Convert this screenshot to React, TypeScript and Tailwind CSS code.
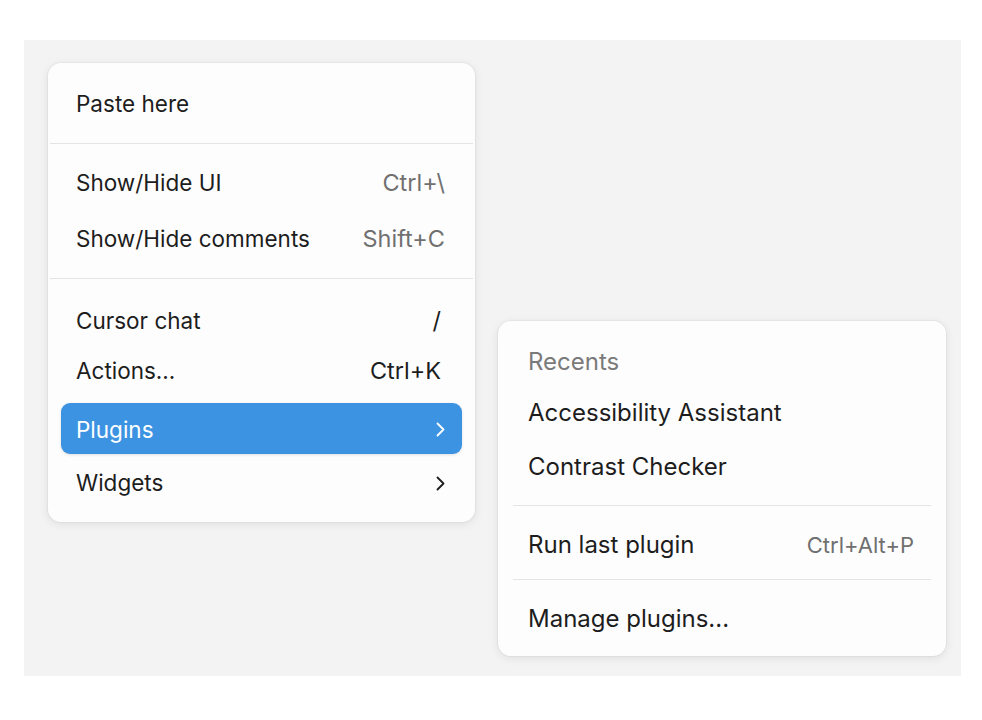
import type { ReactNode } from "react"

const font = { fontFamily: "Inter, 'Noto Sans', sans-serif" }

function Chevron({ className }: { className?: string }) {
  return (
    <svg width="9" height="15" viewBox="0 0 9 15" fill="none" className={className}>
      <path d="M1.5 1.5l6 6-6 6" stroke="currentColor" strokeWidth="1.8" strokeLinecap="round" strokeLinejoin="round" />
    </svg>
  )
}

function Row({
  label,
  right,
  h,
  dimRight = true,
  active = false,
}: {
  label: string
  right?: ReactNode
  h: string
  dimRight?: boolean
  active?: boolean
}) {
  return (
    <div
      className={`${h} mx-[13px] px-[15px] pt-[2px] flex items-center justify-between rounded-[9px] ${
        active ? "bg-[#3c93e2] text-white shadow-[0_1px_3px_rgba(0,0,0,0.12)]" : "text-[#1d1d1d]"
      }`}
    >
      <span>{label}</span>
      {right && (
        <span className={`pr-[2px] text-[23.5px] ${active ? "text-white" : dimRight ? "text-[#707070]" : "text-[#1d1d1d]"}`}>{right}</span>
      )}
    </div>
  )
}

function Divider({ inset }: { inset: string }) {
  return <div className={`h-px bg-[#e4e4e4] ${inset}`} />
}

export default function App() {
  return (
    <div className="w-[982px] h-[720px] bg-white pt-[40px] pl-[24px]" style={font}>
      <div className="w-[937px] h-[636px] bg-[#f3f3f3] flex items-start gap-[23px] pl-[24px] pt-[23px]">
        {/* main context menu */}
        <div className="w-[427px] h-[459px] rounded-[13px] bg-[#fdfdfd] shadow-[0_2px_10px_rgba(0,0,0,0.09),0_0_0_1px_rgba(0,0,0,0.03)] text-[22.5px] flex flex-col">
          <div className="h-[80px] flex flex-col justify-center">
            <Row label="Paste here" h="h-[52px]" />
          </div>
          <Divider inset="mx-[2px]" />
          <div className="pt-[10px] pb-[12px]">
            <Row label="Show/Hide UI" right="Ctrl+\" h="h-[56px]" />
            <Row label="Show/Hide comments" right="Shift+C" h="h-[56px]" />
          </div>
          <Divider inset="mx-[2px]" />
          <div className="pt-[16px] flex flex-col">
            <Row label="Cursor chat" right={<span className="pr-[4px]">/</span>} dimRight={false} h="h-[50px]" />
            <Row label="Actions..." right={<span className="pr-[4px]">Ctrl+K</span>} dimRight={false} h="h-[50px]" />
            <div className="h-[8px]" />
            <Row label="Plugins" right={<Chevron />} active h="h-[51px]" />
            <div className="h-[3px]" />
            <Row label="Widgets" right={<Chevron />} dimRight={false} h="h-[50px]" />
          </div>
        </div>

        {/* plugins submenu */}
        <div className="mt-[258px] w-[448px] h-[335px] rounded-[13px] bg-[#fdfdfd] shadow-[0_2px_10px_rgba(0,0,0,0.09),0_0_0_1px_rgba(0,0,0,0.03)] text-[24px] text-[#1d1d1d] flex flex-col">
          <div className="pt-[20px] pb-[16px] px-[30px]">
            <div className="h-[40px] pt-[2px] flex items-center text-[#7a7a7a]">Recents</div>
            <div className="h-[62px] pt-[2px] flex items-center">Accessibility Assistant</div>
            <div className="h-[46px] pt-[2px] flex items-center">Contrast Checker</div>
          </div>
          <Divider inset="mx-[15px]" />
          <div className="pt-[5px] h-[73px] pl-[30px] pr-[32px] flex items-center justify-between">
            <span>Run last plugin</span>
            <span className="text-[22px] text-[#707070]">Ctrl+Alt+P</span>
          </div>
          <Divider inset="mx-[15px]" />
          <div className="h-[76px] pt-[2px] px-[30px] flex items-center">Manage plugins...</div>
        </div>
      </div>
    </div>
  )
}
